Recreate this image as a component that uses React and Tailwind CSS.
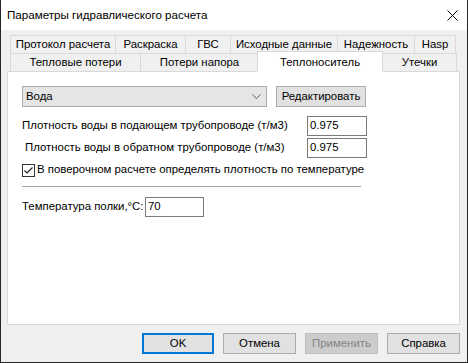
import React from "react";

const font = { fontFamily: '"Liberation Sans", Arial, sans-serif' };

function Tab({ w, label, last }) {
  return (
    <div
      className={`h-full flex items-center justify-center whitespace-nowrap border-t border-l border-[#d9d9d9] ${last ? "border-r" : ""} text-[11.4px] text-black bg-[#f0f0f0]`}
      style={{ width: w }}
    >
      {label}
    </div>
  );
}

export default function App() {
  return (
    <div
      className="w-[468px] h-[363px] bg-[#f0f0f0] border-x border-b border-[#262626] flex flex-col overflow-hidden"
      style={font}
    >
      <div className="h-[30px] bg-white flex items-center justify-between pl-[6px] pr-[9px] shrink-0">
        <span className="text-[11.6px] text-black">Параметры гидравлического расчета</span>
        <svg width="11" height="11" viewBox="0 0 11 11" className="mt-[1px]">
          <path d="M0.5 0.5 L10.5 10.5 M10.5 0.5 L0.5 10.5" stroke="#000" strokeWidth="1" />
        </svg>
      </div>
      <div className="flex flex-col pl-[6px] pr-[7px] pt-[5px]">
        <div className="flex h-[18px] ml-[3px]">
          <Tab w={105} label="Протокол расчета" />
          <Tab w={70} label="Раскраска" />
          <Tab w={45} label="ГВС" />
          <Tab w={107} label="Исходные данные" />
          <Tab w={77} label="Надежность" />
          <Tab w={42} label="Hasp" last />
        </div>
        <div className="flex h-[18px] ml-[3px]">
          <Tab w={130} label="Тепловые потери" />
          <Tab w={118} label="Потери напора" />
          <div className="relative z-10 -mt-[2px] -mx-[1px] h-[21px] w-[126px] bg-white border-t border-x border-[#d9d9d9] flex items-start justify-center pt-[2px] text-[11.4px] text-black whitespace-nowrap">
            Теплоноситель
          </div>
          <Tab w={75} label="Утечки" last />
        </div>
        <div className="h-[254px] bg-white border border-[#d9d9d9] pl-[14px] pt-[14px] text-[11.4px] text-black whitespace-nowrap">
          <div className="flex items-center gap-[9px]">
            <div className="w-[245px] h-[21px] bg-[#e5e5e5] border border-[#acacac] flex items-center justify-between pl-[3px] pr-[5px]">
              <span>Вода</span>
              <svg width="9" height="6" viewBox="0 0 9 6">
                <path d="M0.5 0.5 L4.5 4.5 L8.5 0.5" stroke="#606060" fill="none" strokeWidth="1" />
              </svg>
            </div>
            <div className="w-[90px] h-[21px] bg-[#e1e1e1] border border-[#adadad] flex items-center justify-center">
              Редактировать
            </div>
          </div>
          <div className="flex items-center mt-[9px] h-[20px]">
            <span className="w-[285px]">Плотность воды в подающем трубопроводе (т/м3)</span>
            <div className="w-[60px] h-[20px] border border-[#7a7a7a] bg-white flex items-center pl-[2px]">0.975</div>
          </div>
          <div className="flex items-center mt-[2px] h-[20px]">
            <span className="w-[285px] pl-[3px]">Плотность воды в обратном трубопроводе (т/м3)</span>
            <div className="w-[60px] h-[20px] border border-[#7a7a7a] bg-white flex items-center pl-[2px]">0.975</div>
          </div>
          <div className="flex items-center mt-[5px] gap-[2px] h-[14px]">
            <div className="w-[13px] h-[13px] border border-[#333333] bg-white flex items-center justify-center">
              <svg width="11" height="11" viewBox="0 0 11 11">
                <path d="M1.5 5.5 L4 8 L9.5 2.5" stroke="#222" fill="none" strokeWidth="1.2" />
              </svg>
            </div>
            <span>В поверочном расчете определять плотность по температуре</span>
          </div>
          <div className="w-[339px] h-px bg-[#a0a0a0] mt-[9px]" />
          <div className="flex items-center mt-[10px] h-[20px]">
            <span className="w-[123px]">Температура полки,°C:</span>
            <div className="w-[59px] h-[20px] border border-[#7a7a7a] bg-white flex items-center pl-[2px]">70</div>
          </div>
        </div>
        <div className="flex justify-end gap-[9px] mt-[8px] text-[11.4px]">
          <div className="w-[72px] h-[21px] border-2 border-[#0078d7] bg-[#e1e1e1] flex items-center justify-center text-black">OK</div>
          <div className="w-[73px] h-[21px] border border-[#adadad] bg-[#e1e1e1] flex items-center justify-center text-black">Отмена</div>
          <div className="w-[73px] h-[21px] border border-[#bfbfbf] bg-[#cccccc] flex items-center justify-center text-[#838383]">Применить</div>
          <div className="w-[73px] h-[21px] border border-[#adadad] bg-[#e1e1e1] flex items-center justify-center text-black">Справка</div>
        </div>
      </div>
    </div>
  );
}
